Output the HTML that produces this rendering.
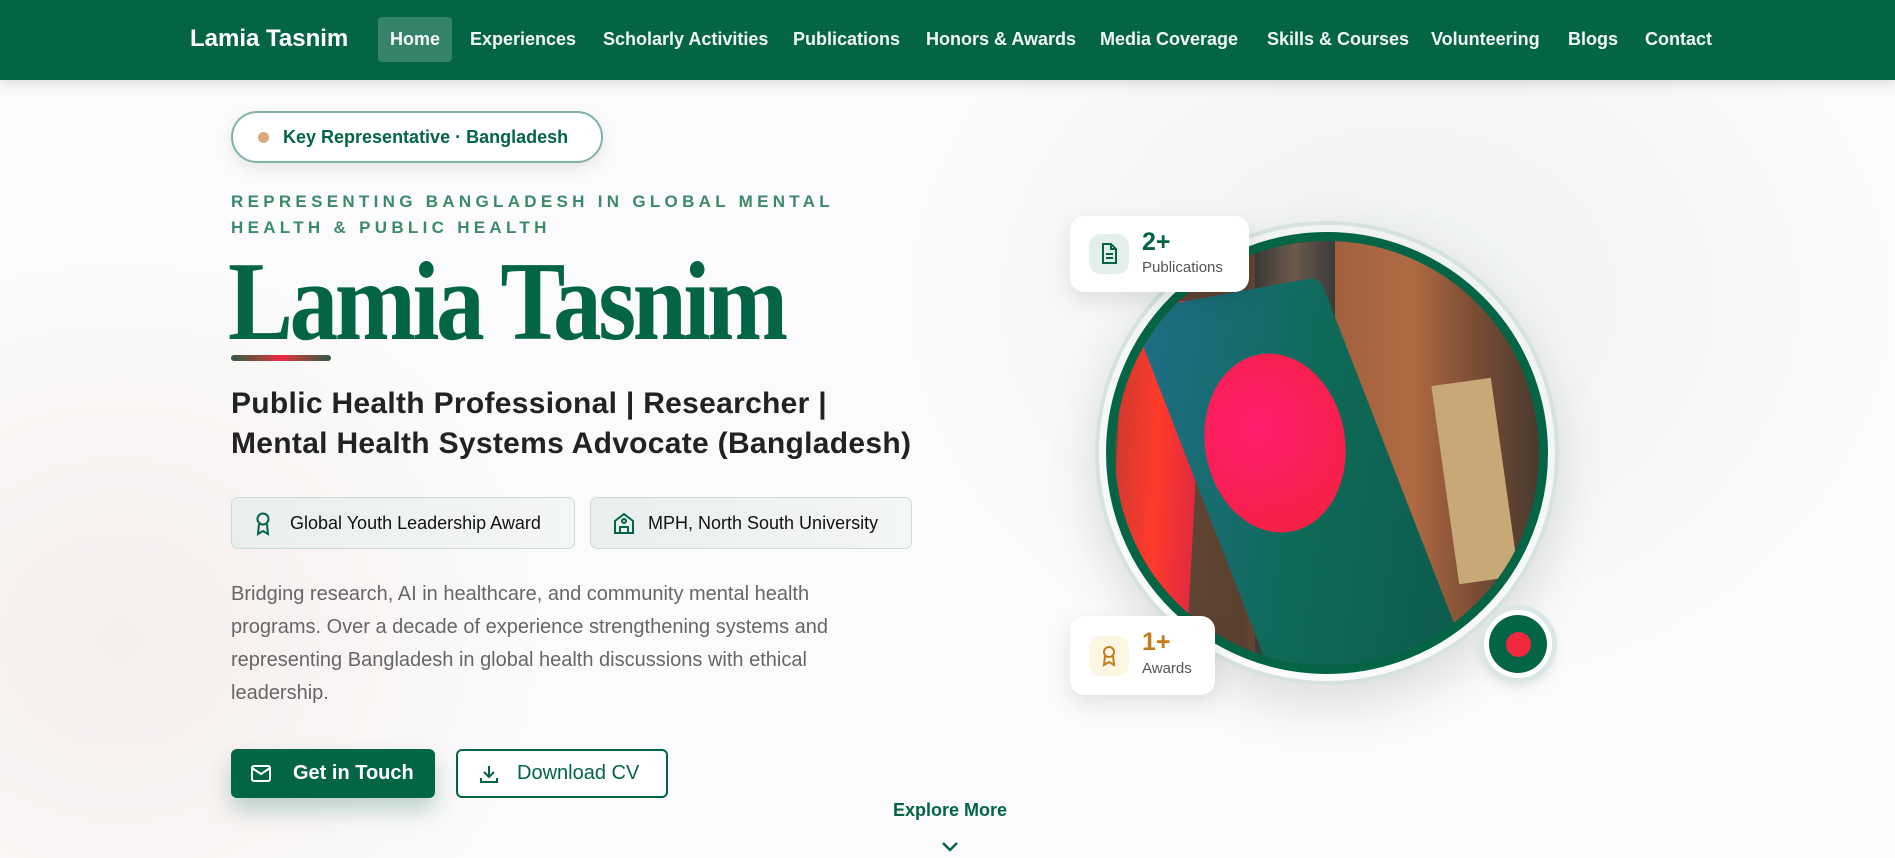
<!DOCTYPE html>
<html><head><meta charset="utf-8"><style>
*{margin:0;padding:0;box-sizing:border-box}
body{width:1895px;height:858px;overflow:hidden;font-family:"Liberation Sans",sans-serif;background:#f9faf9;position:relative}
.bg{position:absolute;inset:0;background:radial-gradient(ellipse 420px 380px at 120px 640px,rgba(240,200,200,.28),transparent),radial-gradient(ellipse 500px 400px at 1400px 300px,rgba(230,235,232,.6),transparent),#fafbfa}
nav{position:absolute;left:0;top:0;width:1895px;height:80px;background:#046546;box-shadow:0 4px 12px rgba(0,0,0,.12)}
nav .logo{position:absolute;left:190px;top:25px;color:#fff;font-weight:700;font-size:24px}
nav a{position:absolute;top:29px;color:#fff;font-size:18px;font-weight:700;text-decoration:none;opacity:.95}
.home{position:absolute;left:378px;top:17px;width:74px;height:45px;background:rgba(255,255,255,.2);border-radius:4px}
.abs{position:absolute}
.badge{left:231px;top:111px;width:372px;height:52px;border:2px solid #7fb5a0;border-radius:26px;background:#fff;box-shadow:0 6px 14px rgba(0,0,0,.08);color:#046546;font-weight:700;font-size:18px;line-height:48px;padding-left:50px}
.badge:before{content:"";position:absolute;left:25px;top:19px;width:11px;height:11px;border-radius:50%;background:#dba97c}
.eyebrow{left:231px;top:189px;width:640px;color:#3c8a68;font-weight:700;font-size:17px;letter-spacing:4.3px;line-height:26px}
h1{position:absolute;left:228px;top:242px;font-family:"Liberation Serif",serif;font-weight:700;font-size:112px;color:#046546;letter-spacing:-4px;line-height:120px;transform:scaleX(.87);transform-origin:left}
.bar{left:231px;top:355px;width:100px;height:6px;border-radius:3px;background:linear-gradient(90deg,#2f5a46,#a8443a 35%,#f02848 50%,#a8443a 65%,#2f5a46)}
.sub{left:231px;top:384px;font-size:30px;font-weight:600;color:#222;line-height:40px;letter-spacing:.3px}
.pill{top:497px;height:52px;border:1px solid #cddcd4;border-radius:7px;background:linear-gradient(90deg,#eaeeec,#f3f6f4);font-size:18px;font-weight:500;color:#111;line-height:50px}
.para{left:231px;top:578px;width:660px;font-size:20px;color:#666;line-height:33px}
.btn{top:749px;height:49px;border-radius:6px;font-size:20px;font-weight:700;line-height:49px}
.card{background:#fff;border-radius:14px;box-shadow:0 8px 22px rgba(0,0,0,.1)}
</style></head><body>
<div class="bg"></div>
<nav><div class="home"></div><div class="logo">Lamia Tasnim</div>
<a style="left:390px">Home</a><a style="left:470px">Experiences</a><a style="left:603px">Scholarly Activities</a><a style="left:793px">Publications</a><a style="left:926px">Honors &amp; Awards</a><a style="left:1100px">Media Coverage</a><a style="left:1267px">Skills &amp; Courses</a><a style="left:1431px">Volunteering</a><a style="left:1568px">Blogs</a><a style="left:1645px">Contact</a></nav>
<div class="abs badge">Key Representative · Bangladesh</div>
<div class="abs eyebrow">REPRESENTING BANGLADESH IN GLOBAL MENTAL HEALTH &amp; PUBLIC HEALTH</div>
<h1>Lamia Tasnim</h1>
<div class="abs bar"></div>
<div class="abs sub">Public Health Professional | Researcher |<br>Mental Health Systems Advocate (Bangladesh)</div>
<div class="abs pill" style="left:231px;width:344px;padding-left:58px"><svg class="abs" style="left:22px;top:14px" width="18" height="24" viewBox="0 0 18 24" fill="none" stroke="#046546" stroke-width="2"><circle cx="9" cy="7" r="5.5"/><path d="M5 12l-1 10 5-3 5 3-1-10"/></svg>Global Youth Leadership Award</div>
<div class="abs pill" style="left:590px;width:322px;padding-left:57px"><svg class="abs" style="left:21px;top:13px" width="24" height="24" viewBox="0 0 24 24" fill="none" stroke="#046546" stroke-width="2"><path d="M3 22V10l9-7 9 7v12zM8 22v-6h8v6"/><circle cx="12" cy="10" r="2"/></svg>MPH, North South University</div>
<div class="abs para">Bridging research, AI in healthcare, and community mental health programs. Over a decade of experience strengthening systems and representing Bangladesh in global health discussions with ethical leadership.</div>
<div class="abs btn" style="left:231px;width:204px;background:#046546;color:#fff;padding-left:62px;box-shadow:0 12px 22px rgba(4,101,70,.25)"><svg class="abs" style="left:20px;top:16px" width="20" height="17" viewBox="0 0 20 17" fill="none" stroke="#fff" stroke-width="2"><rect x="1" y="1" width="18" height="15" rx="2"/><path d="M1 3l9 6 9-6"/></svg>Get in Touch</div>
<div class="abs btn" style="left:456px;width:212px;border:2px solid #046546;background:#fff;color:#046546;padding-left:59px;font-weight:500;line-height:45px"><svg class="abs" style="left:22px;top:14px" width="18" height="18" viewBox="0 0 18 18" fill="none" stroke="#046546" stroke-width="2"><path d="M9 1v11M4 7l5 5 5-5M1 13v4h16v-4"/></svg>Download CV</div>
<div class="abs" style="left:880px;top:800px;width:140px;text-align:center;color:#046546;font-weight:700;font-size:18px">Explore More</div>
<svg class="abs" style="left:940px;top:840px" width="20" height="14" viewBox="0 0 20 14" fill="none" stroke="#046546" stroke-width="2.5"><path d="M3 3l7 7 7-7"/></svg>

<div class="abs" style="left:1095px;top:221px;width:464px;height:464px;border-radius:50%;border:4px solid #d5e3dc;box-shadow:0 20px 50px rgba(0,0,0,.12)"></div>
<div class="abs" style="left:1106px;top:232px;width:442px;height:442px;border-radius:50%;border:9px solid #046546;overflow:hidden;background:linear-gradient(90deg,#6a4a36 0%,#5a4030 30%,#a0603e 50%,#b06a42 70%,#7a4c34 85%,#4a3a30 100%)">
 <div class="abs" style="left:140px;top:0;width:80px;height:440px;background:linear-gradient(90deg,#3b3a38,#6a5a4a,#3b3a38)"></div>
 <div class="abs" style="left:0;top:60px;width:80px;height:380px;background:linear-gradient(90deg,#d23a30,#ff3a2a,#e22a40);transform:skewX(-3deg)"></div>
 <div class="abs" style="left:330px;top:140px;width:60px;height:200px;background:#c9a878;transform:rotate(-8deg)"></div>
 <div class="abs" style="left:180px;top:180px;width:80px;height:260px;background:#1e1a1c;border-radius:30px 30px 0 0"></div>
 <div class="abs" style="left:195px;top:140px;width:44px;height:56px;border-radius:50%;background:#e8c8b4;box-shadow:0 -10px 0 6px #151214"></div>
 <div class="abs" style="left:88px;top:50px;width:200px;height:410px;background:linear-gradient(120deg,#1f6e8a,#0f6a58 50%,#0c5a4c);transform:skewX(12deg) rotate(-10deg);border-radius:10px"></div>
 <div class="abs" style="left:90px;top:112px;width:140px;height:180px;border-radius:50%;background:radial-gradient(circle at 40% 40%,#ff1e6e,#f2203a);transform:rotate(-10deg)"></div>
</div>
<div class="abs" style="left:1484px;top:610px;width:68px;height:68px;border-radius:50%;background:#fff;box-shadow:0 0 0 5px #dbe8e2,0 6px 14px rgba(0,0,0,.15)"><div class="abs" style="left:5px;top:5px;width:58px;height:58px;border-radius:50%;background:#046546"></div><div class="abs" style="left:22px;top:22px;width:25px;height:25px;border-radius:50%;background:#f0283e"></div></div>

<div class="abs card" style="left:1070px;top:216px;width:179px;height:76px">
 <div class="abs" style="left:19px;top:18px;width:40px;height:40px;border-radius:12px;background:#e5efea"></div>
 <svg class="abs" style="left:31px;top:27px" width="16" height="21" viewBox="0 0 16 21" fill="none" stroke="#046546" stroke-width="2"><path d="M2 1h8l5 5v14H2zM10 1v5h5M5 11h7M5 15h7"/></svg>
 <div class="abs" style="left:72px;top:12px;font-size:25px;font-weight:700;color:#046546">2+</div>
 <div class="abs" style="left:72px;top:43px;font-size:15px;color:#555">Publications</div>
</div>
<div class="abs card" style="left:1070px;top:616px;width:145px;height:79px">
 <div class="abs" style="left:19px;top:20px;width:40px;height:40px;border-radius:12px;background:#fdf6e3"></div>
 <svg class="abs" style="left:31px;top:29px" width="16" height="22" viewBox="0 0 16 22" fill="none" stroke="#c77a1a" stroke-width="2"><circle cx="8" cy="7" r="5"/><path d="M4 11l-1 9 5-3 5 3-1-9"/></svg>
 <div class="abs" style="left:72px;top:12px;font-size:25px;font-weight:700;color:#c77a1a">1+</div>
 <div class="abs" style="left:72px;top:44px;font-size:15px;color:#555">Awards</div>
</div>
</body></html>
